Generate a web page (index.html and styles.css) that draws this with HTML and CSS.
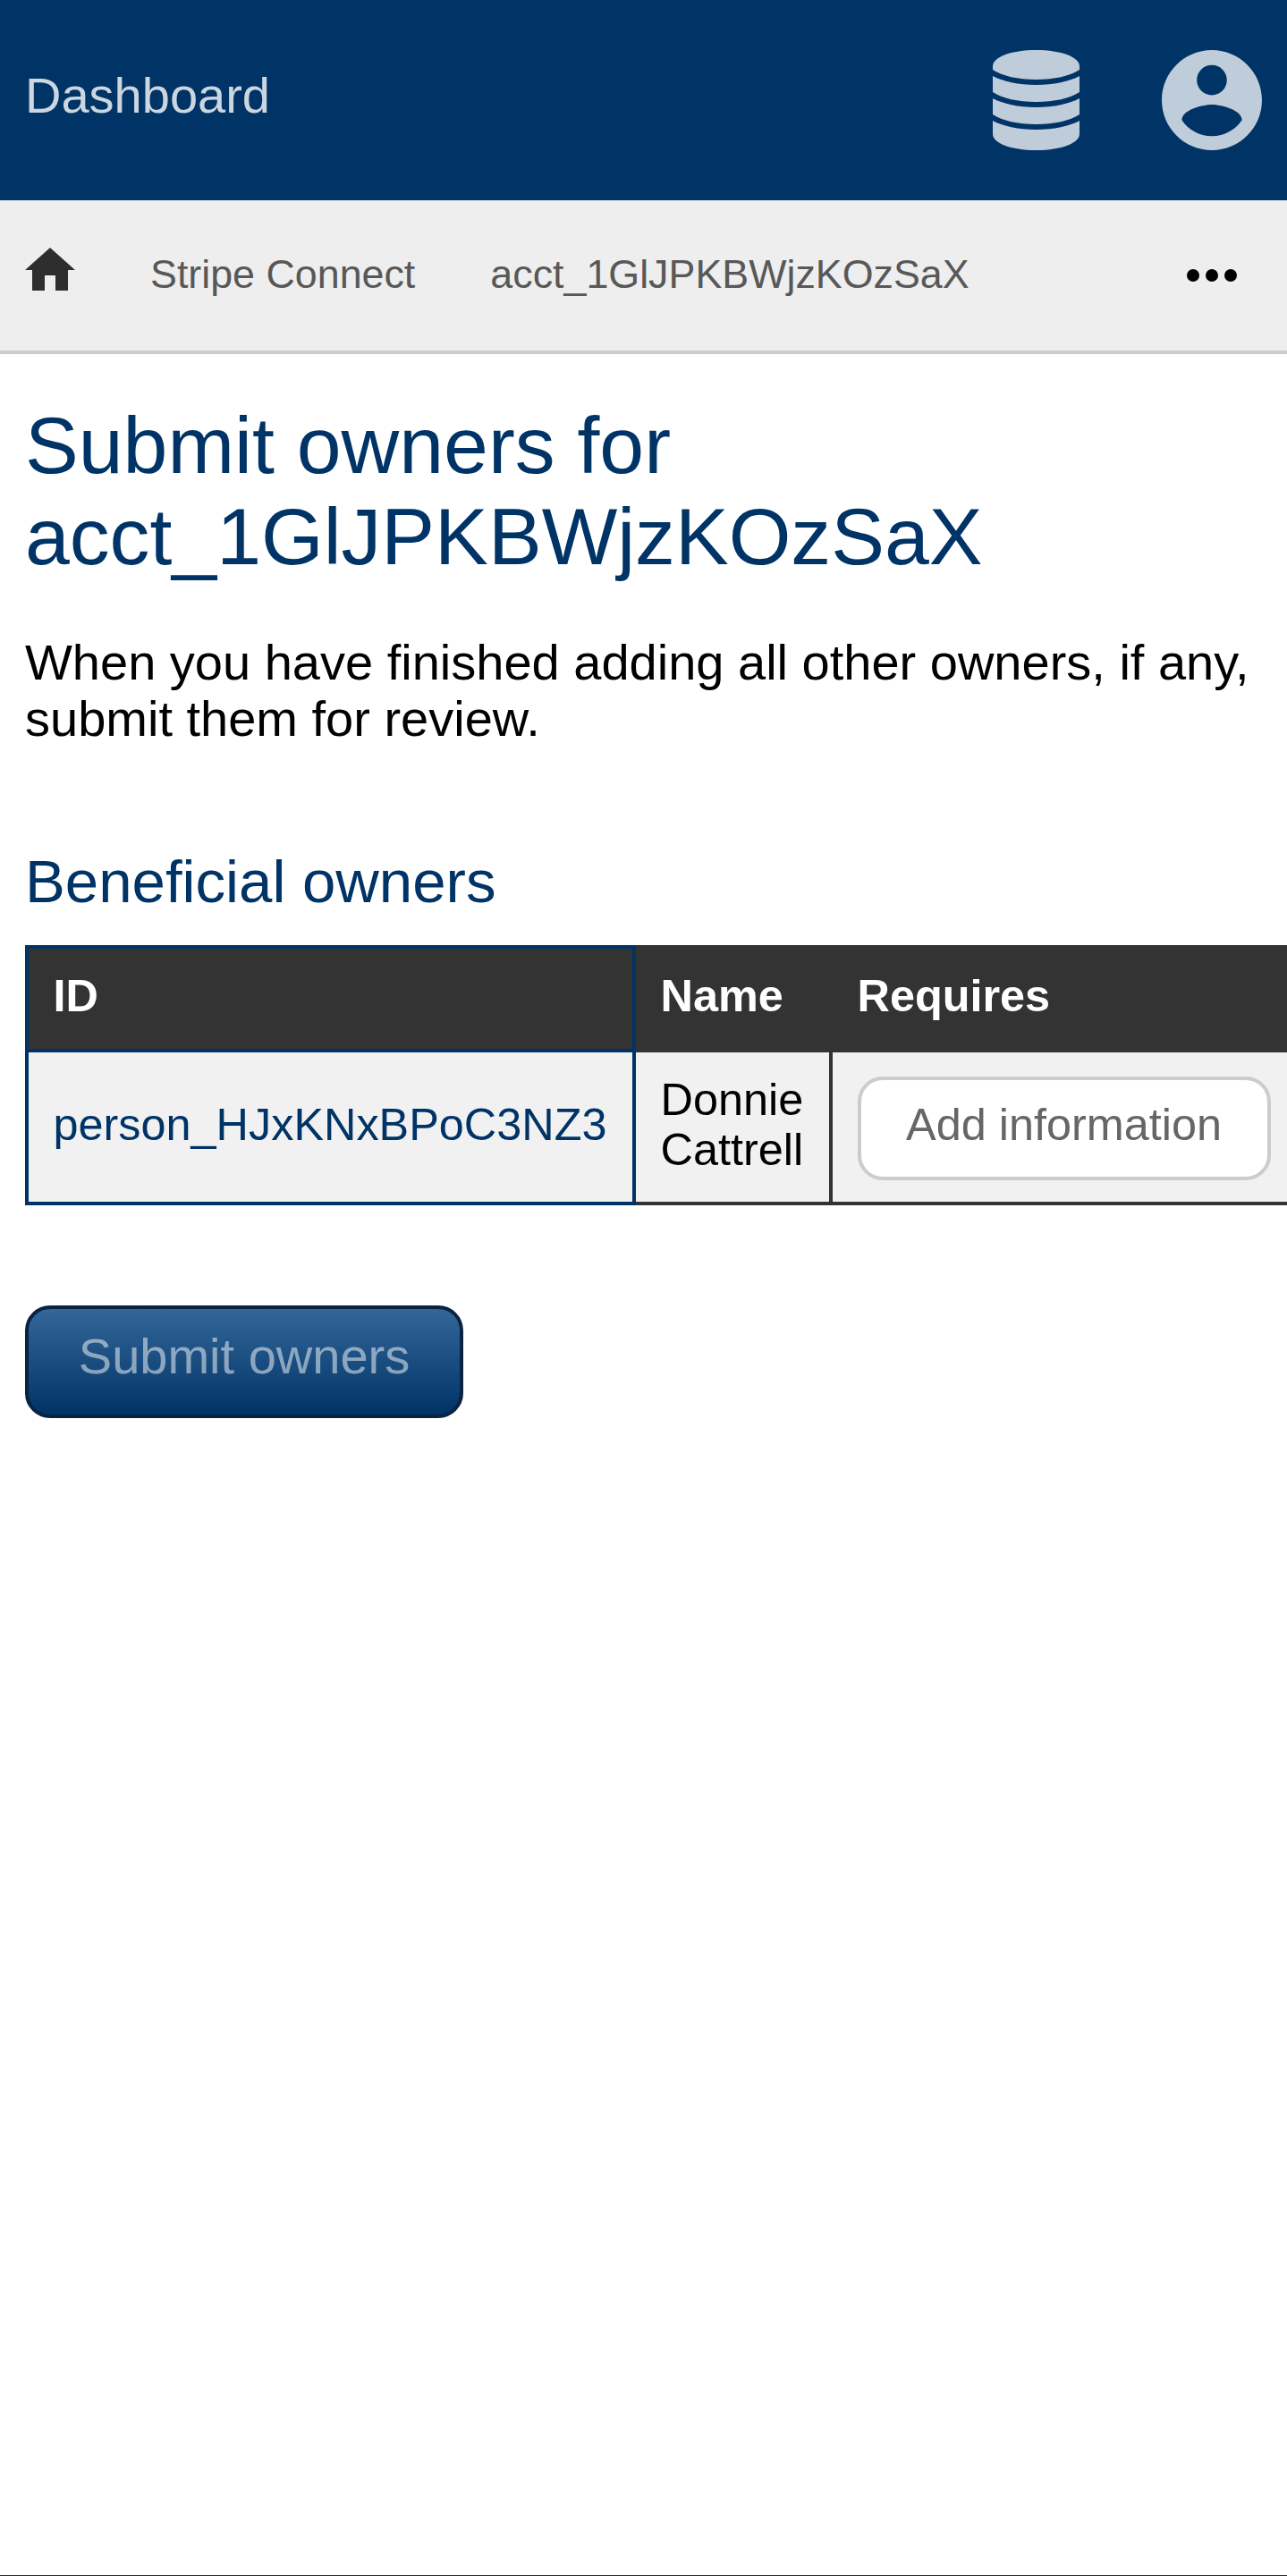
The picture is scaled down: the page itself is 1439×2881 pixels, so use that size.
FILE: index.html
```html
<!DOCTYPE html>
<html lang="en">
<head>
<meta charset="utf-8">
<title>Submit owners</title>
<link rel="stylesheet" href="styles.css">
</head>
<body>
<header class="header">
  <a class="brand">Dashboard</a>
  <div class="menus">
    <svg class="icon-db" viewBox="0 0 97 112" fill="currentColor"><path d="M0 18C0 8 20 0 48.500 0S97 8 97 18V22C86 29 69 33 48.500 33S11 29 0 22Z"/><path d="M0 29C11 35 29 39 48.500 39S86 35 97 29V47C86 54 69 58 48.500 58S11 54 0 47Z"/><path d="M0 54C11 60 29 64 48.500 64S86 60 97 54V72C86 79 69 83 48.500 83S11 79 0 72Z"/><path d="M0 79C11 85 29 89 48.500 89S86 85 97 79V94C97 104 77 112 48.500 112S0 104 0 94Z"/></svg>
    <svg class="icon-account" viewBox="2 2 20 20" fill="currentColor"><path d="M12 2C6.480 2 2 6.480 2 12s4.480 10 10 10 10-4.480 10-10S17.520 2 12 2zm0 3c1.660 0 3 1.340 3 3s-1.340 3-3 3-3-1.340-3-3 1.340-3 3-3zm0 14.200c-2.500 0-4.710-1.280-6-3.220.03-1.990 4-3.080 6-3.080 1.990 0 5.970 1.090 6 3.080-1.290 1.940-3.500 3.220-6 3.220z"/></svg>
  </div>
</header>
<nav class="navbar">
  <svg class="icon-home" viewBox="0 0 56 48"><path d="M28 0L56 25H48V48H34V31H22V48H8V25H0Z" fill="#2e2e2e"/></svg>
  <a>Stripe Connect</a>
  <a>acct_1GlJPKBWjzKOzSaX</a>
  <svg class="icon-more" viewBox="0 0 56 14"><circle cx="7" cy="7" r="7"/><circle cx="28" cy="7" r="7"/><circle cx="49" cy="7" r="7"/></svg>
</nav>
<main class="content">
  <h1>Submit owners for acct_1GlJPKBWjzKOzSaX</h1>
  <p>When you have finished adding all other owners, if any, submit them for review.</p>
  <h2>Beneficial owners</h2>
  <table class="owners">
    <colgroup><col class="col-id"><col class="col-name"><col class="col-requires"></colgroup>
    <thead><tr><th class="id">ID</th><th>Name</th><th>Requires</th></tr></thead>
    <tbody><tr><td class="id"><a>person_HJxKNxBPoC3NZ3</a></td><td>Donnie Cattrell</td><td><a class="button">Add information</a></td></tr></tbody>
  </table>
  <button class="submit">Submit owners</button>
</main>
<footer class="footer"></footer>
</body>
</html>
```
FILE: styles.css
```css
* { box-sizing: border-box; }
html { overflow: hidden; }
body {
  margin: 0;
  height: 2881px;
  display: flex;
  flex-direction: column;
  overflow: hidden;
  background: #fff;
  color: #000;
  font: 56px/63px "Liberation Sans", Arial, sans-serif;
}
.header {
  flex: none;
  height: 224px;
  padding: 0 28px;
  display: flex;
  align-items: center;
  justify-content: space-between;
  background: #036;
}
.brand { color: #ccd6e0; padding-bottom: 11px; }
.menus { display: flex; gap: 92px; color: #bfccd9; }
.menus svg { display: block; height: 112px; }
.icon-db { width: 97px; }
.icon-account { width: 112px; }
.navbar {
  flex: none;
  height: 172px;
  padding: 0 56px 4px 28px;
  display: flex;
  align-items: center;
  gap: 84px;
  background: #eee;
  border-bottom: 4px solid #ccc;
  color: #585858;
  font-size: 44.8px;
  line-height: 52px;
}
.icon-home { width: 56px; height: 48px; margin-bottom: 10px; }
.icon-more { width: 56px; height: 14px; margin: 4px 0 0 auto; }
.content { flex: 1; padding: 51px 28px 0; }
h1, h2 { margin: 0; color: #036; font-weight: 400; }
h1 { font-size: 89.6px; line-height: 102px; }
p { margin: 58px 0 0; }
h2 { margin-top: 112px; font-size: 67.2px; line-height: 77px; }
.owners {
  width: 1426px;
  margin-top: 33px;
  table-layout: fixed;
  border-collapse: collapse;
  font-size: 50.4px;
  line-height: 56px;
}
.col-id { width: 679px; }
.col-name { width: 220px; }
.owners th, .owners td {
  padding: 0 27.5px;
  border: 4px solid #333;
  text-align: left;
}
.owners th { height: 116px; padding-bottom: 6px; background: #333; color: #fff; }
.owners td { height: 171px; padding-bottom: 6px; background: #f1f1f1; }
.owners .id { border-color: #036; }
.id a { color: #036; }
.button {
  display: block;
  width: 462px;
  height: 116px;
  margin-top: 8px;
  padding-top: 22px;
  border: 4px solid #ccc;
  border-radius: 28px;
  background: #fff;
  color: #666;
  text-align: center;
}
.submit {
  display: block;
  width: 490px;
  height: 126px;
  margin-top: 112px;
  padding: 0 0 14px;
  border: 4px solid #0a2340;
  border-radius: 28px;
  background: linear-gradient(#369, #036);
  color: rgba(255, 255, 255, 0.5);
  font: inherit;
}
.footer { flex: none; height: 1px; background: #036; }
```
